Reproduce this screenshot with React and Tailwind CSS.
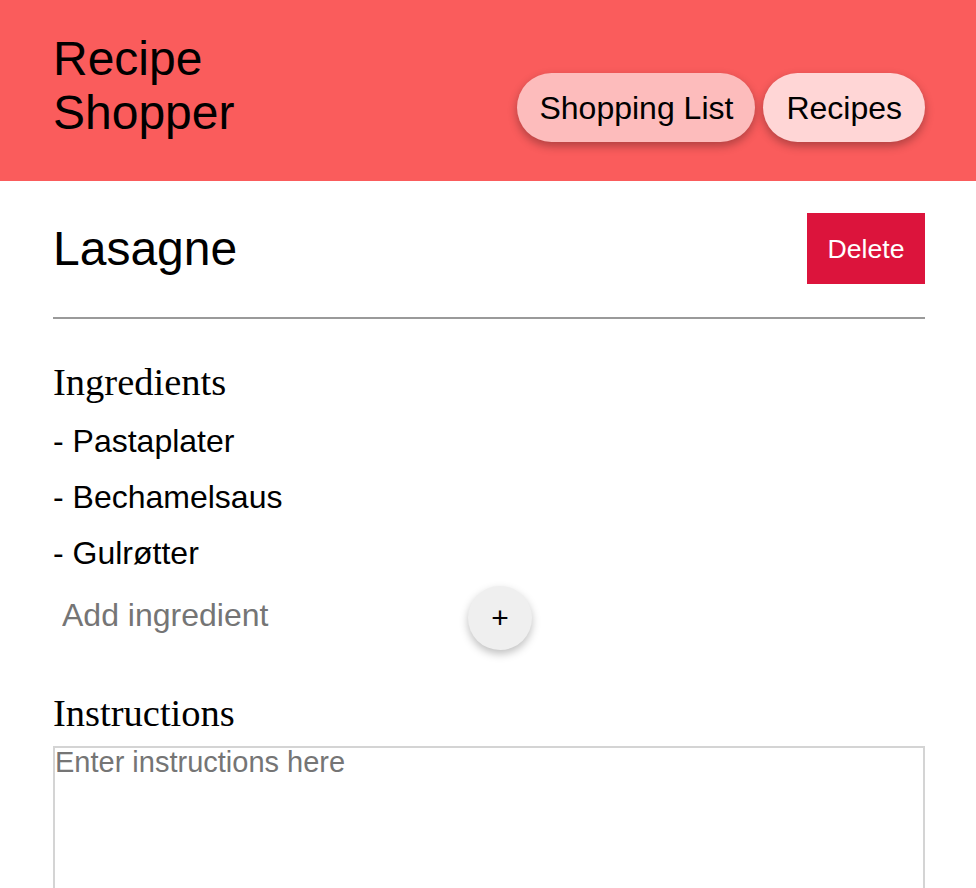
import React, { useState } from 'react';

const ingredients = ['Pastaplater', 'Bechamelsaus', 'Gulrøtter'];

function NavButton({ label, active }) {
  return (
    <button
      className={`h-[69px] rounded-full text-[32px] leading-none text-black shadow-[0_4px_10px_rgba(0,0,0,0.3)] ${
        active ? 'bg-[#fdbcbc] px-[22px]' : 'bg-[#ffd6d6] px-[23px]'
      }`}
    >
      {label}
    </button>
  );
}

export default function App() {
  const [ingredient, setIngredient] = useState('');
  const [instructions, setInstructions] = useState('');

  return (
    <div className="min-h-screen bg-white font-['Liberation_Sans',Arial,sans-serif] text-black">
      <header className="h-[181px] bg-[#fa5c5c] flex justify-between items-start pl-[53px] pr-[51px]">
        <h1 className="mt-[32px] text-[48px] leading-[54px] font-normal">
          Recipe
          <br />
          Shopper
        </h1>
        <nav className="mt-[73px] flex gap-2">
          <NavButton label="Shopping List" active />
          <NavButton label="Recipes" />
        </nav>
      </header>

      <main className="pl-[53px] pr-[51px]">
        <div className="mt-[32px] flex items-center justify-between">
          <h2 className="text-[48px] leading-none font-normal">Lasagne</h2>
          <button className="w-[118px] h-[71px] bg-[#dc143c] text-white text-[26.67px]">Delete</button>
        </div>

        <hr className="mt-[33px] border-0 border-t-2 border-[#9a9a9a]" />

        <h3 className="mt-[43px] font-['Liberation_Serif','Times_New_Roman',serif] text-[38.5px] leading-[41.5px] font-normal">
          Ingredients
        </h3>
        <ul className="mt-[9px]">
          {ingredients.map((item) => (
            <li key={item} className="text-[32px] leading-[56px]">
              - {item}
            </li>
          ))}
        </ul>

        <div className="mt-[5px] flex items-start">
          <input
            value={ingredient}
            onChange={(e) => setIngredient(e.target.value)}
            placeholder="Add ingredient"
            className="mt-[5px] w-[407px] pl-[9px] bg-transparent outline-none text-[32px] placeholder:text-[#757575]"
          />
          <button className="ml-[8px] w-[64px] h-[64px] rounded-full bg-[#efefef] text-[30px] leading-none shadow-[0_4px_8px_rgba(0,0,0,0.25)]">
            +
          </button>
        </div>

        <h3 className="mt-[43px] font-['Liberation_Serif','Times_New_Roman',serif] text-[38.5px] leading-[41.5px] font-normal">
          Instructions
        </h3>
        <textarea
          value={instructions}
          onChange={(e) => setInstructions(e.target.value)}
          placeholder="Enter instructions here"
          className="mt-[12px] block w-full h-[300px] border-2 border-[#d4d4d4] p-0 text-[29px] leading-[29px] outline-none resize-none placeholder:text-[#757575]"
        />
      </main>
    </div>
  );
}
